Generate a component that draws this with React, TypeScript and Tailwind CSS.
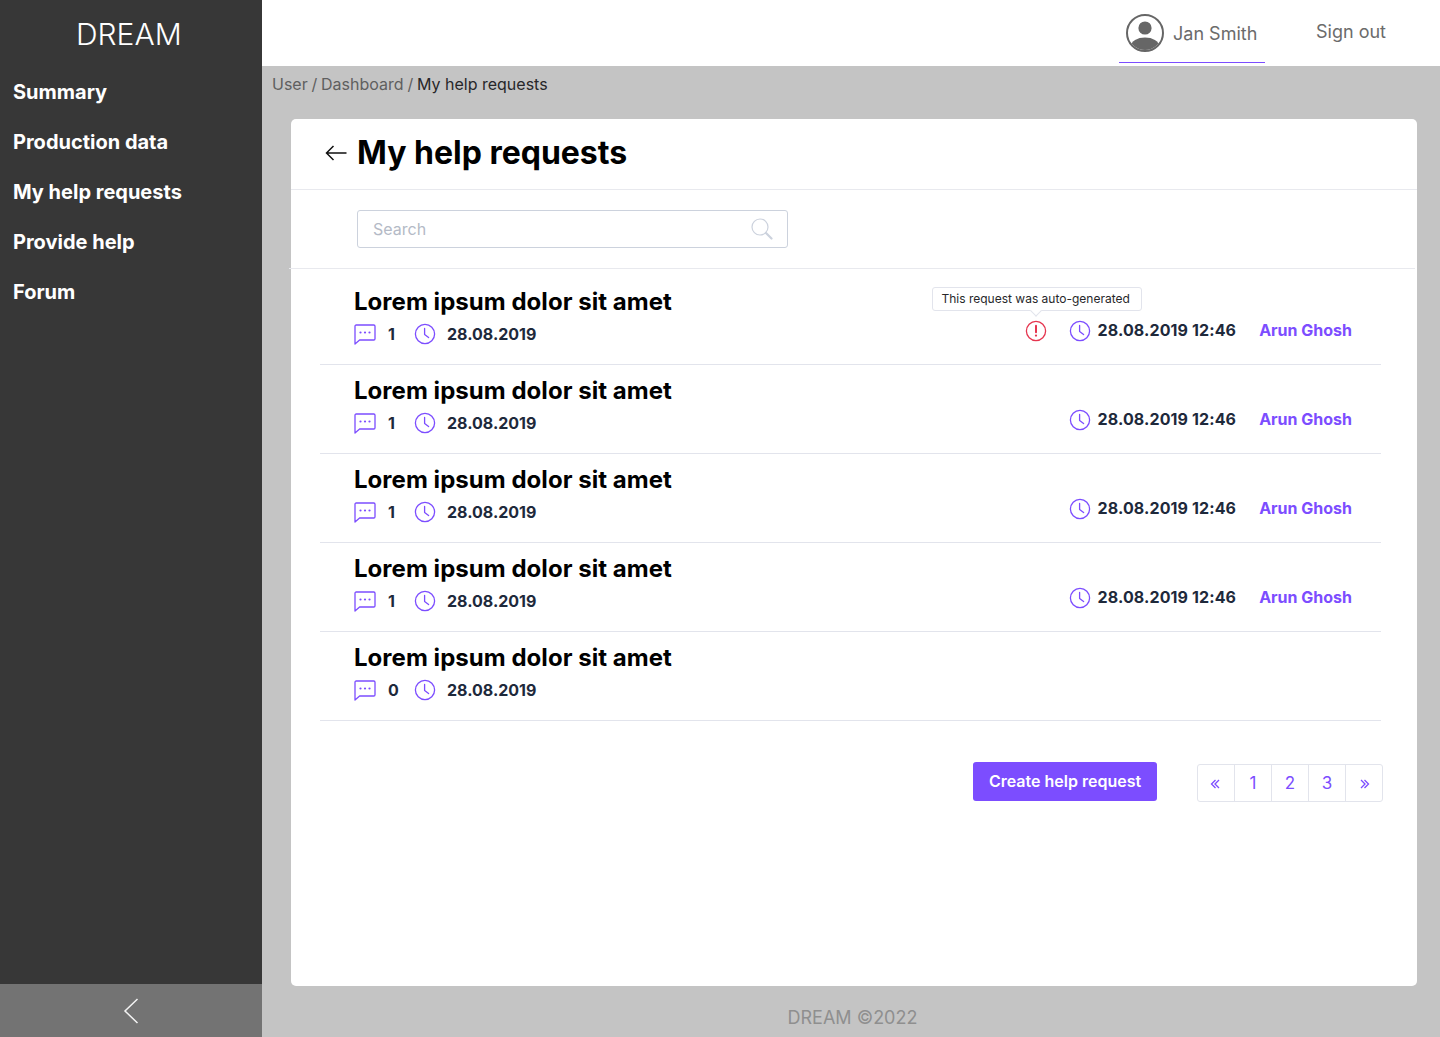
import React from "react";

const navItems = ["Summary", "Production data", "My help requests", "Provide help", "Forum"];

const requests = [
  { count: 1, updated: "28.08.2019 12:46", author: "Arun Ghosh", flagged: true },
  { count: 1, updated: "28.08.2019 12:46", author: "Arun Ghosh", flagged: false },
  { count: 1, updated: "28.08.2019 12:46", author: "Arun Ghosh", flagged: false },
  { count: 1, updated: "28.08.2019 12:46", author: "Arun Ghosh", flagged: false },
  { count: 0, updated: "", author: "", flagged: false },
];

function ClockIcon({ className = "" }: { className?: string }) {
  return (
    <svg width="22" height="22" viewBox="0 0 22 22" fill="none" stroke="#7c4dff" strokeWidth="1.3" className={`shrink-0 ${className}`}>
      <circle cx="11" cy="11" r="9.6" />
      <path d="M10.6 5.5v6l4 3" strokeLinecap="round" strokeLinejoin="round" />
    </svg>
  );
}

function CommentIcon() {
  return (
    <svg width="22" height="21" viewBox="0 0 22 21" fill="none" className="shrink-0">
      <path
        d="M1 2.2C1 1.5 1.5 1 2.2 1h17.6c.7 0 1.2.5 1.2 1.2v12.6c0 .7-.5 1.2-1.2 1.2H5.6L1 20V2.2z"
        stroke="#7c4dff"
        strokeWidth="1.3"
        strokeLinejoin="round"
      />
      <circle cx="6.5" cy="8.5" r="1.1" fill="#7c4dff" />
      <circle cx="11" cy="8.5" r="1.1" fill="#7c4dff" />
      <circle cx="15.5" cy="8.5" r="1.1" fill="#7c4dff" />
    </svg>
  );
}

function AlertIcon() {
  return (
    <svg width="22" height="22" viewBox="0 0 22 22" fill="none" className="shrink-0">
      <circle cx="11" cy="11" r="9.6" stroke="#e5354f" strokeWidth="1.3" />
      <path d="M11 5.8v6.4" stroke="#e5354f" strokeWidth="2" strokeLinecap="round" />
      <circle cx="11" cy="15.6" r="1.15" fill="#e5354f" />
    </svg>
  );
}

function RequestRow({ count, updated, author, flagged, first }: { count: number; updated: string; author: string; flagged: boolean; first: boolean }) {
  return (
    <div className={`flex justify-between border-b border-[#e2e4ec] pl-[34px] pr-[29px] ${first ? "h-[96px] pt-[18px]" : "h-[89px] pt-[11px]"}`}>
      <div>
        <h2 className="text-[24px] leading-[30px] font-bold tracking-[0.04px] text-black">Lorem ipsum dolor sit amet</h2>
        <div className="mt-[4px] flex h-[26px] items-center">
          <CommentIcon />
          <span className="ml-[12px] w-[26px] text-[16px] font-bold text-[#1e293b]">{count}</span>
          <ClockIcon />
          <span className="ml-[11px] text-[16px] font-bold text-[#1e293b]">28.08.2019</span>
        </div>
      </div>
      {updated && (
        <div className="relative mt-[31px] flex h-[26px] items-center">
          {flagged && (
            <>
              <div className="absolute -top-[31px] -left-[137px] flex h-[24px] w-[210px] items-center rounded-[3px] border border-[#e2e4ec] bg-white pl-[8px] text-[12px] whitespace-nowrap text-[#27272a]">
                This request was auto-generated
              </div>
              <div className="absolute -top-[11px] -left-[37px] h-[8px] w-[8px] rotate-45 border-r border-b border-[#e2e4ec] bg-white" />
              <div className="absolute -left-[44px] top-[2px]">
                <AlertIcon />
              </div>
            </>
          )}
          <ClockIcon />
          <span className="mb-[2px] ml-[6px] text-[16px] font-bold tracking-[0.12px] whitespace-nowrap text-[#1e293b]">{updated}</span>
          <span className="mb-[2px] ml-[23px] text-[16px] font-bold whitespace-nowrap text-[#7c4dff]">{author}</span>
        </div>
      )}
    </div>
  );
}

function PageChevrons({ dir }: { dir: "left" | "right" }) {
  return (
    <svg width="12" height="12" viewBox="0 0 12 12" fill="none" stroke="#7c4dff" strokeWidth="1.3">
      <path d={dir === "left" ? "M5.5 2 1.5 6l4 4M9 2 5 6l4 4" : "M3 2l4 4-4 4M6.5 2l4 4-4 4"} />
    </svg>
  );
}

export default function App() {
  return (
    <div className="flex h-[1037px] w-[1440px] overflow-hidden bg-[#c4c4c4] font-['Inter',sans-serif]">
      {/* Sidebar */}
      <aside className="flex w-[262px] shrink-0 flex-col bg-[#373737] text-white">
        <div className="flex-1">
          <div className="pt-[16px] pl-[76px] text-[30px] leading-[37px] font-light">DREAM</div>
          <nav className="mt-[14px]">
            {navItems.map((item) => (
              <div key={item} className="flex h-[50px] items-center pl-[13px] text-[20px] font-bold">
                {item}
              </div>
            ))}
          </nav>
        </div>
        <div className="flex h-[53px] items-center justify-center bg-[#737373]">
          <svg width="16" height="28" viewBox="0 0 16 28" fill="none" stroke="#f3f3f3" strokeWidth="1.5">
            <path d="M14.5 2 2 14l12.5 12" />
          </svg>
        </div>
      </aside>

      <div className="flex min-w-0 flex-1 flex-col">
        {/* Top bar */}
        <header className="flex h-[66px] shrink-0 justify-end bg-white pr-[54px]">
          <div className="flex h-[63px] w-[146px] items-center gap-[9px] border-b border-[#7c4dff] pl-[7px] text-[18px] text-[#6b6b6b]">
            <svg width="38" height="38" viewBox="0 0 38 38" className="mt-[3px] shrink-0">
              <defs>
                <clipPath id="avatar-clip">
                  <circle cx="19" cy="19" r="17" />
                </clipPath>
              </defs>
              <circle cx="19" cy="19" r="18" fill="none" stroke="#666" strokeWidth="2" />
              <circle cx="19" cy="14" r="6.6" fill="#666" />
              <ellipse cx="19" cy="32" rx="14" ry="8.5" fill="#666" clipPath="url(#avatar-clip)" />
            </svg>
            <span className="mt-[5px]">Jan Smith</span>
          </div>
          <div className="ml-[51px] flex h-[63px] items-center text-[18px] text-[#6b6b6b]">Sign out</div>
        </header>

        {/* Breadcrumb */}
        <div className="flex h-[53px] shrink-0 items-start pt-[8px] pl-[10px] text-[16px] leading-[20px] whitespace-pre text-[#5f5f5f] [word-spacing:-0.7px]">
          User / Dashboard / <span className="text-[#27272a] [word-spacing:0px]">My help requests</span>
        </div>

        {/* Card */}
        <main className="ml-[29px] flex h-[867px] w-[1126px] shrink-0 flex-col rounded-[5px] bg-white">
          <div className="flex h-[71px] shrink-0 items-center gap-[10px] border-b border-[#e8e9ee] pb-[2px] pl-[34px]">
            <svg width="22" height="16" viewBox="0 0 22 16" fill="none" stroke="#111" strokeWidth="1.5">
              <path d="M21.5 8H1.5M8.5 1 1.5 8l7 7" />
            </svg>
            <h1 className="text-[32px] leading-[40px] font-bold text-black">My help requests</h1>
          </div>

          {/* this rule sits 2px left of the card in the design */}
          <div className="mr-[2px] -ml-[2px] flex h-[79px] shrink-0 items-start border-b border-[#e8e9ee] pt-[20px] pl-[68px]">
            <div className="flex h-[38px] w-[431px] items-center justify-between rounded-[3px] border border-[#ccd2dd] pr-[14px] pl-[15px] text-[16px] text-[#b4bac6]">
              <span>Search</span>
              <svg width="22" height="22" viewBox="0 0 22 22" fill="none" stroke="#ccd2dd">
                <circle cx="9" cy="9" r="8" strokeWidth="1.2" />
                <path d="m15 15 5.5 5.5" strokeWidth="2.2" strokeLinecap="round" />
              </svg>
            </div>
          </div>

          <div className="mr-[36px] ml-[29px]">
            {requests.map((r, i) => (
              <RequestRow key={i} {...r} first={i === 0} />
            ))}
          </div>

          <div className="mt-[41px] flex items-start justify-end pr-[34px]">
            <button className="mr-[40px] h-[39px] w-[184px] rounded-[3px] bg-[#7c4dff] pb-[1px] text-[16px] font-semibold text-white">
              Create help request
            </button>
            <div className="mt-[2px] flex h-[38px] w-[186px] rounded-[3px] border border-[#e2e4ec] text-[#7c4dff]">
              {["«", "1", "2", "3", "»"].map((p, i) => (
                <div key={p} className={`flex flex-1 items-center justify-center pt-[1px] text-[17px] ${i > 0 ? "border-l border-[#e2e4ec]" : ""}`}>
                  {p === "«" ? <PageChevrons dir="left" /> : p === "»" ? <PageChevrons dir="right" /> : p}
                </div>
              ))}
            </div>
          </div>
        </main>

        {/* Footer */}
        <footer className="flex flex-1 items-center justify-center pt-[12px] pl-[3px] text-[18px] text-[#8f8f8f]">DREAM ©2022</footer>
      </div>
    </div>
  );
}
